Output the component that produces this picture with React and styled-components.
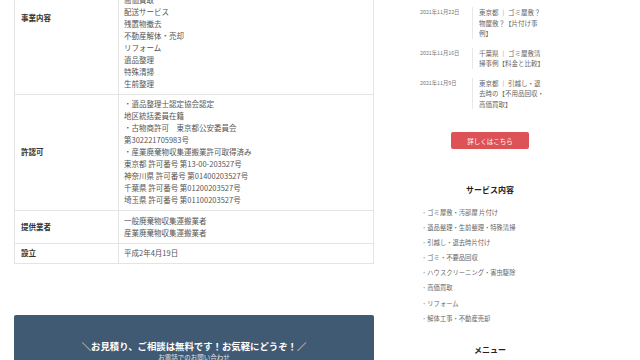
import React from 'react';
import styled, { createGlobalStyle } from 'styled-components';

const GlobalStyle = createGlobalStyle`
	html, body {
		margin: 0;
		padding: 0;
		background: #fff;
		overflow: hidden;
	}
	body {
		font-family: 'Noto Sans CJK JP', 'Noto Sans', sans-serif;
		color: #444;
	}
`;

const Page = styled.div`
	display: flex;
	width: 640px;
	height: 360px;
	overflow: hidden;
	gap: 36px;
`;

const Main = styled.main`
	width: 360px;
	margin-left: 14px;
	margin-top: -59px;
	display: flex;
	flex-direction: column;
`;

const Table = styled.table`
	width: 100%;
	border-collapse: collapse;
	font-size: 7.5px;
	line-height: 12px;
	color: #555;
`;

const Label = styled.th`
	width: 91px;
	padding: 3.75px 6px;
	border: 1px solid #e4e4e4;
	text-align: left;
	font-weight: 700;
	color: #333;
	vertical-align: middle;
`;

const Value = styled.td`
	padding: 3.75px 5px;
	border: 1px solid #e4e4e4;
	vertical-align: top;
`;

const Line = styled.div`
	white-space: nowrap;
`;

const CtaBox = styled.section`
	margin-top: 51px;
	background: #405a74;
	border-radius: 2px;
	padding: 25px 10px 0;
	color: #fff;
	text-align: center;
	height: 80px;
`;

const CtaTitle = styled.p`
	margin: 0;
	font-size: 9.4px;
	line-height: 12px;
	font-weight: 700;
`;

const CtaSub = styled.p`
	margin: 0;
	font-size: 6.5px;
	line-height: 10px;
	opacity: 0.85;
`;

const Side = styled.aside`
	width: 160px;
	padding-top: 7px;
	display: flex;
	flex-direction: column;
	align-items: stretch;
`;

const NewsList = styled.ul`
	list-style: none;
	margin: 0;
	padding: 0 0 0 10px;
	display: flex;
	flex-direction: column;
	gap: 9px;
`;

const NewsItem = styled.li`
	display: flex;
`;

const NewsDate = styled.span`
	width: 52px;
	font-size: 5.3px;
	line-height: 10.5px;
	color: #777;
`;

const NewsTitle = styled.span`
	width: 66px;
	padding-left: 6px;
	border-left: 1px solid #e8e8e8;
	font-size: 6.5px;
	line-height: 10.5px;
	color: #666;
`;

const Button = styled.a`
	align-self: center;
	margin-top: 23px;
	width: 78px;
	height: 17px;
	display: flex;
	align-items: center;
	justify-content: center;
	background: #dc5257;
	border-radius: 2px;
	color: #fff;
	font-size: 6.5px;
	text-decoration: none;
`;

const Heading = styled.h3`
	margin: ${(props) => props.top}px 0 0;
	text-align: center;
	font-size: 8px;
	line-height: 12px;
	font-weight: 700;
	color: #222;
`;

const ServiceList = styled.ul`
	list-style: none;
	margin: 9px 0 0;
	padding: 0 0 0 11px;
`;

const ServiceItem = styled.li`
	font-size: 6.3px;
	line-height: 15.1px;
	color: #666;
	white-space: nowrap;
	&::before {
		content: '・';
		color: #aaa;
	}
`;

const business = [
	'ゴミ屋敷片付け',
	'不用品回収',
	'ハウスクリーニング',
	'害虫駆除',
	'高価買取',
	'配送サービス',
	'残置物撤去',
	'不動産解体・売却',
	'リフォーム',
	'遺品整理',
	'特殊清掃',
	'生前整理',
];

const permits = [
	'・遺品整理士認定協会認定',
	'地区統括委員在籍',
	'・古物商許可　東京都公安委員会',
	'第302221705983号',
	'・産業廃棄物収集運搬業許可取得済み',
	'東京都 許可番号 第13-00-203527号',
	'神奈川県 許可番号 第01400203527号',
	'千葉県 許可番号 第01200203527号',
	'埼玉県 許可番号 第01100203527号',
];

const rows = [
	{ label: '事業内容', lines: business },
	{ label: '許認可', lines: permits },
	{ label: '提供業者', lines: ['一般廃棄物収集運搬業者', '産業廃棄物収集運搬業者'] },
	{ label: '設立', lines: ['平成2年4月19日'] },
];

const news = [
	{ date: '2021年11月22日', title: '東京都 ｜ ゴミ屋敷？物屋敷？【片付け事例】' },
	{ date: '2021年11月16日', title: '千葉県 ｜ ゴミ屋敷清掃事例【料金と比較】' },
	{ date: '2021年11月9日', title: '東京都 ｜ 引越し・退去時の【不用品回収・高価買取】' },
];

const services = [
	'ゴミ屋敷・汚部屋 片付け',
	'遺品整理・生前整理・特殊清掃',
	'引越し・退去時片付け',
	'ゴミ・不要品回収',
	'ハウスクリーニング・害虫駆除',
	'高価買取',
	'リフォーム',
	'解体工事・不動産売却',
];

const App = () => {
	return (
		<>
			<GlobalStyle />
			<Page>
				<Main>
					<Table>
						<tbody>
							{rows.map((row) => (
								<tr key={row.label}>
									<Label>{row.label}</Label>
									<Value>
										{row.lines.map((line) => (
											<Line key={line}>{line}</Line>
										))}
									</Value>
								</tr>
							))}
						</tbody>
					</Table>
					<CtaBox>
						<CtaTitle>＼お見積り、ご相談は無料です！お気軽にどうぞ！／</CtaTitle>
						<CtaSub>お電話でのお問い合わせ</CtaSub>
					</CtaBox>
				</Main>
				<Side>
					<NewsList>
						{news.map((item) => (
							<NewsItem key={item.date}>
								<NewsDate>{item.date}</NewsDate>
								<NewsTitle>{item.title}</NewsTitle>
							</NewsItem>
						))}
					</NewsList>
					<Button href='#'>詳しくはこちら</Button>
					<Heading top={35}>サービス内容</Heading>
					<ServiceList>
						{services.map((s) => (
							<ServiceItem key={s}>{s}</ServiceItem>
						))}
					</ServiceList>
					<Heading top={18}>メニュー</Heading>
				</Side>
			</Page>
		</>
	);
};

export default App;
